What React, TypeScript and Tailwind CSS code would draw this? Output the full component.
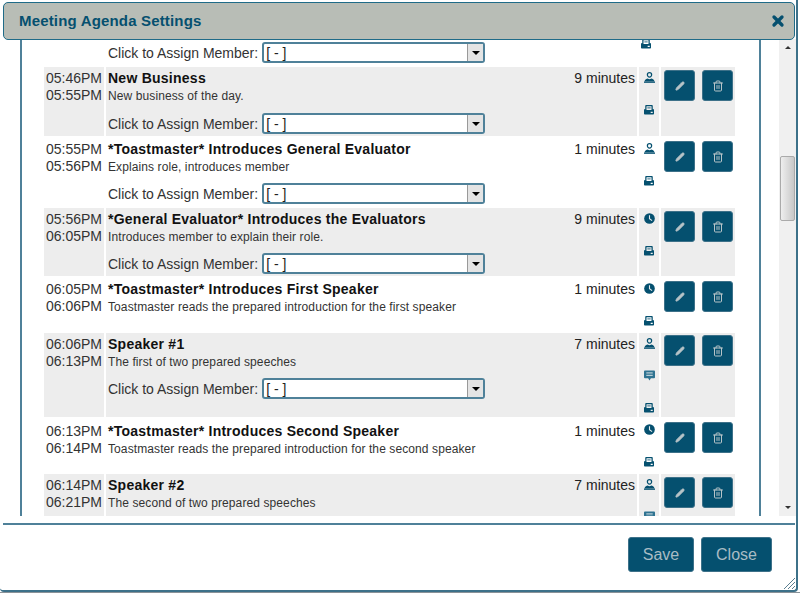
import { Pencil, Trash2, X } from "lucide-react";

type Item = {
  start: string;
  end: string;
  title: string;
  desc: string;
  mins: string;
  icons: string[];
  assignClass?: string;
  gray: boolean;
  height: string;
  textTop: string;
  actionTop: string;
};

const items: Item[] = [
  { start: "05:46PM", end: "05:55PM", title: "New Business", desc: "New business of the day.", mins: "9 minutes", icons: ["user", "book"], assignClass: "mt-[8px]", gray: true, height: "h-[69px]", textTop: "pt-[3px]", actionTop: "pt-[3px]" },
  { start: "05:55PM", end: "05:56PM", title: "*Toastmaster* Introduces General Evaluator", desc: "Explains role, introduces member", mins: "1 minutes", icons: ["user", "book"], assignClass: "mt-[7px]", gray: false, height: "h-[68px]", textTop: "pt-[3px]", actionTop: "pt-[3px]" },
  { start: "05:56PM", end: "06:05PM", title: "*General Evaluator* Introduces the Evaluators", desc: "Introduces member to explain their role.", mins: "9 minutes", icons: ["clock", "book"], assignClass: "mt-[7px]", gray: true, height: "h-[68px]", textTop: "pt-[3px]", actionTop: "pt-[3px]" },
  { start: "06:05PM", end: "06:06PM", title: "*Toastmaster* Introduces First Speaker", desc: "Toastmaster reads the prepared introduction for the first speaker", mins: "1 minutes", icons: ["clock", "book"], gray: false, height: "h-[53px]", textTop: "pt-[3px]", actionTop: "pt-[3px]" },
  { start: "06:06PM", end: "06:13PM", title: "Speaker #1", desc: "The first of two prepared speeches", mins: "7 minutes", icons: ["user", "chat", "book"], assignClass: "mt-[7px]", gray: true, height: "h-[84px]", textTop: "pt-[3px]", actionTop: "pt-[2px]" },
  { start: "06:13PM", end: "06:14PM", title: "*Toastmaster* Introduces Second Speaker", desc: "Toastmaster reads the prepared introduction for the second speaker", mins: "1 minutes", icons: ["clock", "book"], gray: false, height: "h-[53px]", textTop: "pt-[4px]", actionTop: "pt-[3px]" },
  { start: "06:14PM", end: "06:21PM", title: "Speaker #2", desc: "The second of two prepared speeches", mins: "7 minutes", icons: ["user", "chat"], gray: true, height: "h-[68px]", textTop: "pt-[3px]", actionTop: "pt-[3px]" },
];

function UserIcon() {
  return (
    <svg viewBox="0 0 12 12" className="w-[11px] h-[11px]" fill="#05506f">
      <path fillRule="evenodd" d="M6 0a3 3 0 0 1 3 3c0 1.700-1.300 3.200-3 3.200S3 4.700 3 3a3 3 0 0 1 3-3zm0 1.400A1.600 1.600 0 0 0 4.400 3 1.600 1.600 0 0 0 6 4.800 1.600 1.600 0 0 0 7.600 3 1.600 1.600 0 0 0 6 1.400z" />
      <path d="M3.600 7.200 6 8l2.400-.8c1.400.4 2.600 1.400 3.100 3.100H.5c.5-1.700 1.700-2.700 3.100-3.100z" />
      <rect x="0" y="10.400" width="12" height="1.400" />
    </svg>
  );
}

function BookIcon() {
  return (
    <svg viewBox="0 0 12 12" className="w-[10px] h-[10px]" fill="#05506f">
      <path fillRule="evenodd" d="M2.500 0h7a1 1 0 0 1 1 1v4H12v5.500a1 1 0 0 1-1 1H1a1 1 0 0 1-1-1V5h1.500V1a1 1 0 0 1 1-1zM3 1.500V6h6V1.500zM8 8v1.500h2.500V8z" />
      <rect x="4" y="3" width="4" height="1" />
    </svg>
  );
}

function ClockIcon() {
  return (
    <svg viewBox="0 0 12 12" className="w-[11px] h-[11px]">
      <circle cx="6" cy="6" r="5.800" fill="#05506f" />
      <path d="M6 2.500V6.300L8.800 8.300" fill="none" stroke="#e6ecee" strokeWidth="1.200" />
    </svg>
  );
}

function ChatIcon() {
  return (
    <svg viewBox="0 0 12 12" className="w-[11px] h-[11px]">
      <path d="M1 .5h10a1 1 0 0 1 1 1v6.500a1 1 0 0 1-1 1H7.500L6 11.500 4.500 9H1a1 1 0 0 1-1-1V1.500a1 1 0 0 1 1-1z" fill="#2f7391" />
      <path d="M2.500 3.200h7M2.500 5.800h7" stroke="#e6ecee" strokeWidth="1" />
    </svg>
  );
}

function RowIcon({ name }: { name: string }) {
  if (name === "user") return <UserIcon />;
  if (name === "book") return <BookIcon />;
  if (name === "clock") return <ClockIcon />;
  return <ChatIcon />;
}

function AssignRow() {
  return (
    <div className="flex items-center text-[14px] text-[#333] leading-5">
      <span className="mr-[4px]">Click to Assign Member:</span>
      <div className="w-[223px] h-[21px] bg-white border-2 border-[#4f8199] rounded-[3px] flex items-center justify-between pl-[2px] text-[#222]">
        <span>[ - ]</span>
        <span className="w-[16px] h-[17px] bg-[#e4e4e4] border-l border-[#999] flex items-center justify-center">
          <span className="w-0 h-0 border-x-[4px] border-x-transparent border-t-[4px] border-t-black" />
        </span>
      </div>
    </div>
  );
}

function ActionButton({ children }: { children: React.ReactNode }) {
  return (
    <button className="w-[31px] h-[31px] rounded-[3px] bg-[#05506f] border border-[#3d7189] flex items-center justify-center">
      {children}
    </button>
  );
}

function AgendaRow({ item }: { item: Item }) {
  const bg = item.gray ? "bg-[#ededed]" : "bg-white";
  return (
    <div className={`flex gap-[2px] shrink-0 overflow-hidden ${item.height}`}>
      <div className={`w-[60px] text-right pr-[2px] text-[14px] leading-[17px] text-[#333] ${item.textTop} ${bg}`}>
        <div>{item.start}</div>
        <div>{item.end}</div>
      </div>
      <div className={`w-[531px] pl-[2px] pr-[2px] ${item.textTop} ${bg}`}>
        <div className="flex justify-between">
          <div className="text-[14px] leading-[17px] font-bold text-[#111] tracking-[0.25px]">{item.title}</div>
          <div className="text-[14px] leading-[17px] text-[#222]">{item.mins}</div>
        </div>
        <div className="text-[12px] leading-[17px] text-[#333] mt-[1px] tracking-[0.1px]">{item.desc}</div>
        {item.assignClass && (
          <div className={item.assignClass}>
            <AssignRow />
          </div>
        )}
      </div>
      <div className={`w-[20px] pt-[5px] flex flex-col items-center gap-[21px] ${bg}`}>
        {item.icons.map((name, i) => (
          <div key={i} className="h-[11px] flex items-center">
            <RowIcon name={name} />
          </div>
        ))}
      </div>
      <div className={`w-[74px] pl-[3px] flex gap-[7px] items-start ${item.actionTop} ${bg}`}>
        <ActionButton>
          <Pencil size={10} color="#b8c4c8" fill="#b8c4c8" />
        </ActionButton>
        <ActionButton>
          <Trash2 size={12} color="#b8c4c8" />
        </ActionButton>
      </div>
    </div>
  );
}

export default function App() {
  return (
    <div className="w-[800px] h-[593px] bg-white border-b border-[#8a9298] overflow-hidden font-['Liberation_Sans',Arial,sans-serif] relative">
      <div className="w-[798px] h-[592px] bg-white border-b-2 border-r-2 border-[#3d7189] rounded-b-[4px] flex flex-col relative">
        {/* Title bar */}
        <div className="ml-[3px] mr-[1px] mt-[2px] h-[38px] shrink-0 bg-[#b8bdb6] border border-[#1f6b88] rounded-[5px] flex items-center justify-between pl-[15px] pr-[8px] z-10">
          <span className="text-[15px] font-bold text-[#05506f] tracking-[0.17px]">Meeting Agenda Settings</span>
          <X size={16} color="#05506f" strokeWidth={5} />
        </div>

        {/* Scroll area */}
        <div className="flex h-[477px] shrink-0 -mt-[1px]">
          <div className="ml-[20px] w-[741px] border-x-2 border-[#4f8199] pl-[22px] flex flex-col gap-[2px] overflow-hidden">
            <div className="h-[26px] shrink-0 flex items-start pl-[64px] pt-[3px] relative">
              <AssignRow />
              <div className="absolute left-[597px] top-0">
                <BookIcon />
              </div>
            </div>
            {items.map((item) => (
              <AgendaRow key={item.start} item={item} />
            ))}
          </div>
          <div className="ml-[18px] w-[17px] bg-[#f0f0f0] flex flex-col items-center justify-between py-[7px] relative">
            <span className="w-0 h-0 border-x-[3px] border-x-transparent border-b-[3px] border-b-[#333]" />
            <span className="absolute top-[117px] left-[1px] w-[15px] h-[65px] rounded-[2px] border border-[#aaa] bg-gradient-to-r from-[#eee] to-[#c8c8c8]" />
            <span className="w-0 h-0 border-x-[3px] border-x-transparent border-t-[3px] border-t-[#333]" />
          </div>
        </div>

        {/* Footer */}
        <div className="mt-[7px] ml-[3px] mr-[1px] border-t-2 border-[#4f8199] flex justify-end gap-[7px] pt-[12px] pr-[23px]">
          <button className="w-[66px] h-[35px] bg-[#05506f] border border-[#3d7189] rounded-[3px] text-[16px] text-[#a9bcc4]">Save</button>
          <button className="w-[71px] h-[35px] bg-[#05506f] border border-[#3d7189] rounded-[3px] text-[16px] text-[#a9bcc4]">Close</button>
        </div>

        {/* Resize grip */}
        <svg viewBox="0 0 12 12" className="absolute right-[1px] bottom-[1px] w-[12px] h-[12px]" stroke="#5a7f90" strokeWidth="1">
          <path d="M1 12 12 1M5 12l7-7M9 12l3-3" />
        </svg>
      </div>
    </div>
  );
}
